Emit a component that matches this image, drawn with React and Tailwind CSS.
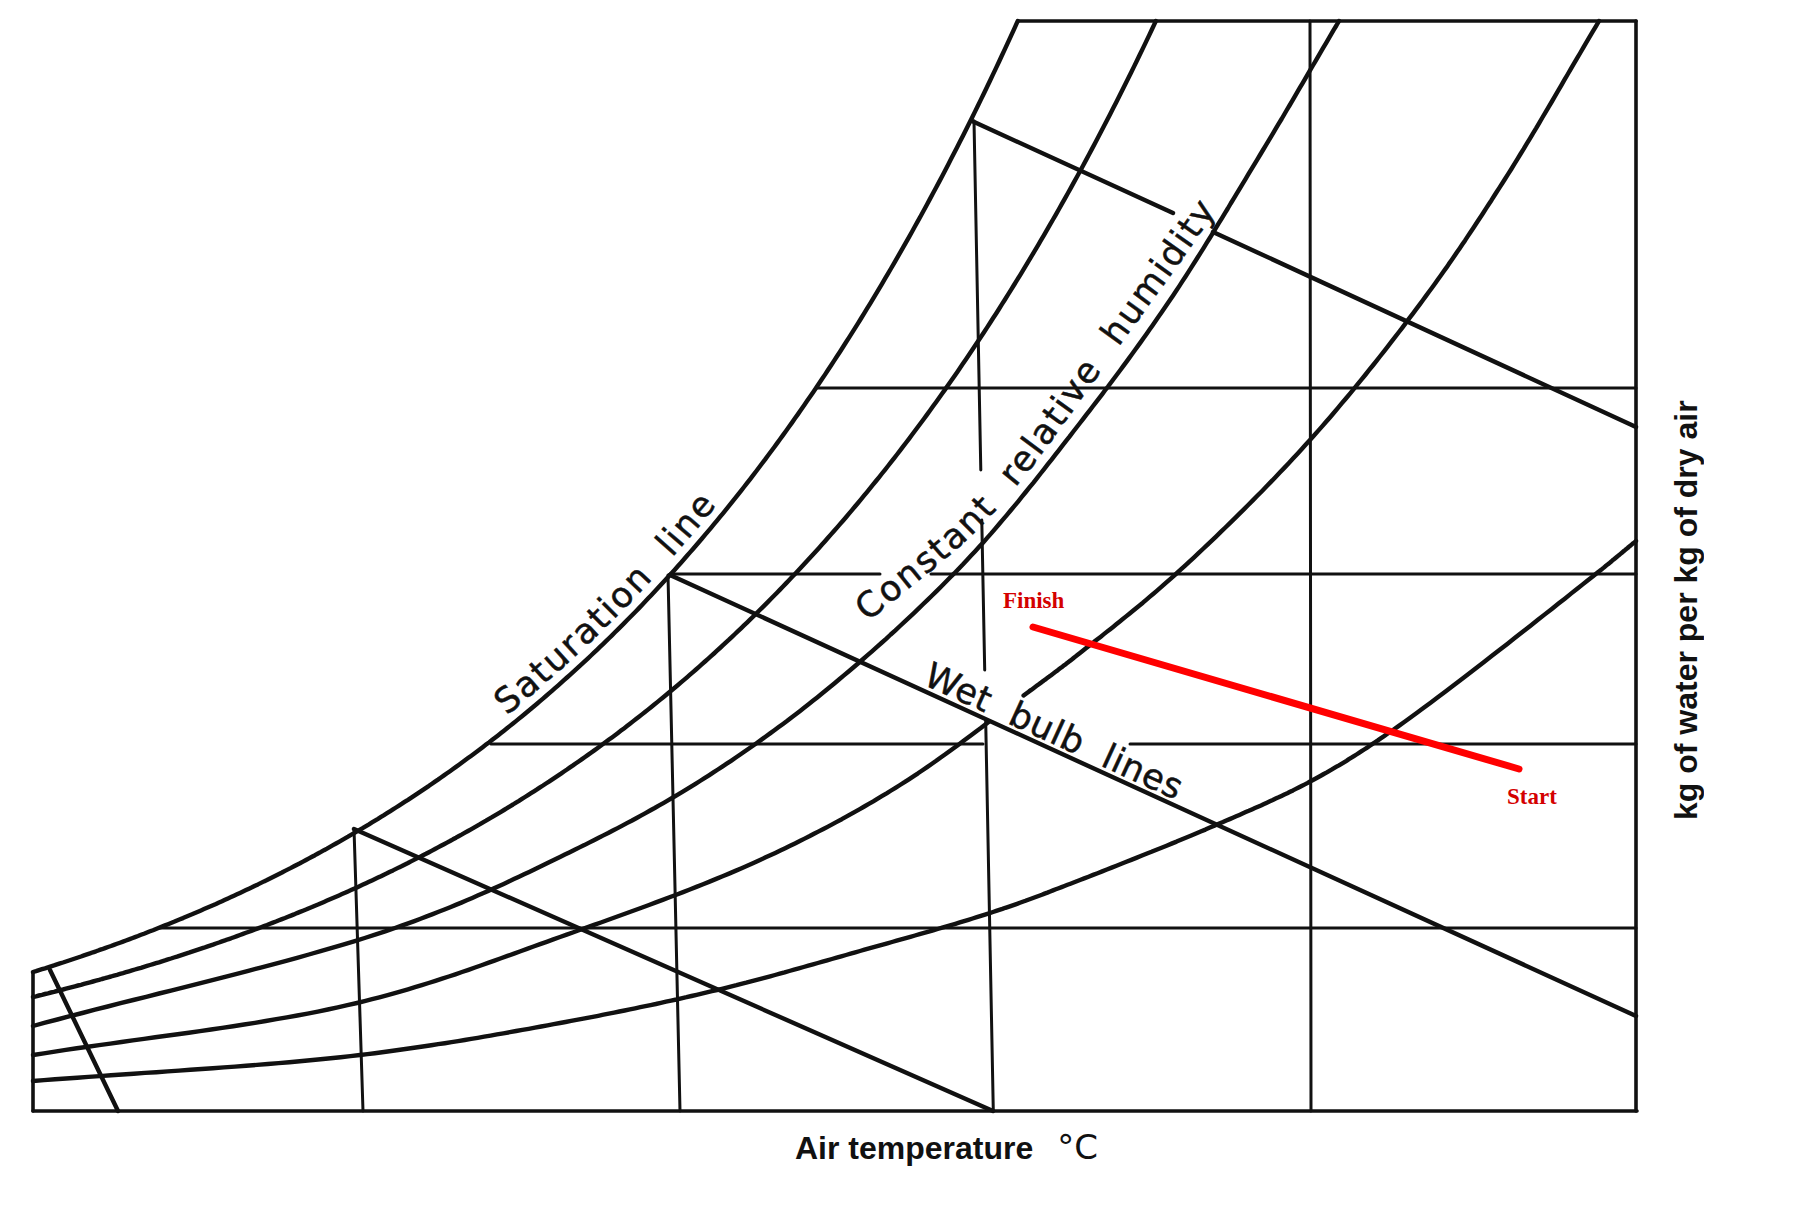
import React from 'react';

function crSeg(p0, p1, p2, p3, n, out) {
  const d = (a, b) => Math.pow(Math.hypot(b[0] - a[0], b[1] - a[1]), 0.5) || 1e-4;
  const t0 = 0, t1 = t0 + d(p0, p1), t2 = t1 + d(p1, p2), t3 = t2 + d(p2, p3);
  for (let j = 0; j < n; j++) {
    const t = t1 + ((t2 - t1) * j) / n;
    const lerp = (a, b, ta, tb) => [
      ((tb - t) * a[0] + (t - ta) * b[0]) / (tb - ta),
      ((tb - t) * a[1] + (t - ta) * b[1]) / (tb - ta),
    ];
    const A1 = lerp(p0, p1, t0, t1), A2 = lerp(p1, p2, t1, t2), A3 = lerp(p2, p3, t2, t3);
    const B1 = lerp(A1, A2, t0, t2), B2 = lerp(A2, A3, t1, t3);
    out.push(lerp(B1, B2, t1, t2));
  }
}

function spline(pts, n = 30) {
  const out = [];
  const L = pts.length;
  const first = [2 * pts[0][0] - pts[1][0], 2 * pts[0][1] - pts[1][1]];
  const last = [2 * pts[L - 1][0] - pts[L - 2][0], 2 * pts[L - 1][1] - pts[L - 2][1]];
  for (let i = 0; i < L - 1; i++) {
    const p0 = i === 0 ? first : pts[i - 1];
    const p3 = i + 2 < L ? pts[i + 2] : last;
    crSeg(p0, pts[i], pts[i + 1], p3, n, out);
  }
  out.push(pts[L - 1]);
  return out;
}

// exponential humidity curve: y = 1111 - (A * e^(k(x-33)) + B), cut at top frame y = 21
function expCurve(A, k, B) {
  const out = [];
  const f = (x) => 1111 - (A * Math.exp(k * (x - 33)) + B);
  let prev = null;
  for (let x = 33; x < 1700; x += 3) {
    const p = [x, f(x)];
    if (p[1] < 21) {
      const t = (prev[1] - 21) / (prev[1] - p[1]);
      out.push([prev[0] + t * (p[0] - prev[0]), 21]);
      break;
    }
    out.push(p);
    prev = p;
  }
  return out;
}

const toD = (poly) => 'M' + poly.map((p) => p[0].toFixed(1) + ' ' + p[1].toFixed(1)).join(' L');

function offset(poly, dist) {
  return poly.map((p, i) => {
    const a = poly[Math.max(0, i - 1)], b = poly[Math.min(poly.length - 1, i + 1)];
    const tx = b[0] - a[0], ty = b[1] - a[1];
    const len = Math.hypot(tx, ty) || 1;
    return [p[0] + (dist * ty) / len, p[1] - (dist * tx) / len];
  });
}

const satPoly = expCurve(154.2, 0.002, -15.2);
const c2Poly = expCurve(126.2, 0.00193, -12.2);
const c3Poly = spline([[33, 1026], [395, 928], [560, 857], [700, 781], [830, 687], [967, 560], [1080, 423], [1170, 300], [1260, 155], [1339, 21]]);
const c4Poly = spline([[33, 1055], [357, 1003], [560, 937], [760, 860], [900, 785], [1027, 693], [1080, 653], [1177, 573], [1310, 440], [1423, 300], [1505, 179], [1599, 21]]);
const c5Poly = spline([[33, 1081], [360, 1055], [560, 1023], [717, 990], [860, 951], [993, 912], [1080, 880], [1223, 822], [1313, 780], [1393, 730], [1597, 573], [1636, 541]]);

const satText = toD(offset(satPoly, 10).filter((p) => p[0] >= 505));
const rhText = toD(spline([[868, 622], [990, 517], [1120, 345], [1215, 212], [1250, 155], [1290, 90]]));

const v3x = (y) => 974 + 0.0195 * (y - 121);

const GRID = [
  // horizontal humidity lines
  [817, 388, 1636, 388],
  [670, 574, 880, 574],
  [931, 574, 1636, 574],
  [491, 744, 983, 744],
  [1130, 744, 1636, 744],
  [159, 928, 1636, 928],
  // vertical temperature lines
  [354, 829, 363, 1111],
  [668, 575, 680, 1111],
  [v3x(121), 121, v3x(470), 470],
  [v3x(520), 520, v3x(670), 670],
  [v3x(720), 720, v3x(1111), 1111],
  [1310, 21, 1311, 1111],
];

const FRAME = [
  [33, 972, 33, 1111],
  [33, 1111, 1637, 1111],
  [1636, 21, 1636, 1111],
  [1018, 21, 1636, 21],
];

const WET = [
  [50, 970, 118, 1111],
  [354, 829, 993, 1111],
  [670, 575, 1636, 1016],
  [972, 121, 1173, 213],
  [1213, 232, 1636, 427],
];

function Lines({ list }) {
  return list.map((l, i) => <line key={i} x1={l[0]} y1={l[1]} x2={l[2]} y2={l[3]} />);
}

function Chart() {
  const c4a = c4Poly.filter((p) => p[0] <= 992);
  const c4b = c4Poly.filter((p) => p[0] >= 1022);
  const curves = [satPoly, c2Poly, c3Poly, c4a, c4b, c5Poly];
  const labelFont = "'DejaVu Sans', 'Open Sans', sans-serif";
  return (
    <svg width="1650" height="1120" viewBox="0 0 1650 1120" className="block shrink-0">
      <defs>
        <path id="satText" d={satText} />
        <path id="rhText" d={rhText} />
      </defs>
      <g stroke="#111" strokeWidth="3" strokeLinecap="round" fill="none">
        <Lines list={GRID} />
      </g>
      <g stroke="#111" strokeWidth="3.6" strokeLinecap="round" strokeLinejoin="round" fill="none">
        <Lines list={FRAME} />
      </g>
      <g stroke="#111" strokeWidth="4.4" strokeLinecap="round" strokeLinejoin="round" fill="none">
        <Lines list={WET} />
        {curves.map((c, i) => (
          <path key={i} d={toD(c)} />
        ))}
      </g>
      <g fill="#111" stroke="#111" strokeWidth="0.5" fontFamily={labelFont} fontSize="35" letterSpacing="2">
        <text>
          <textPath href="#satText">{'Saturation\u00A0\u00A0line'}</textPath>
        </text>
        <text>
          <textPath href="#rhText">{'Constant\u00A0\u00A0relative\u00A0\u00A0humidity'}</textPath>
        </text>
        <text transform="translate(922 684) rotate(24.6)" letterSpacing="0.6">
          {'Wet\u00A0\u00A0bulb\u00A0\u00A0lines'}
        </text>
      </g>
      <line x1="1033" y1="627" x2="1519" y2="769" stroke="#ff0000" strokeWidth="7" strokeLinecap="round" />
      <g fill="#d40000" fontFamily="'Liberation Serif', 'Times New Roman', serif" fontWeight="700" fontSize="23">
        <text x="1003" y="608">Finish</text>
        <text x="1507" y="804">Start</text>
      </g>
    </svg>
  );
}

export default function App() {
  return (
    <div className="w-[1803px] h-[1224px] bg-white overflow-hidden text-[#111]">
      <div className="flex h-[1120px]">
        <Chart />
        <div className="pt-[400px] pl-[20px]">
          <div className="[writing-mode:vertical-rl] rotate-180 h-[420px] text-center whitespace-nowrap font-['Liberation_Sans',Arial,sans-serif] font-bold text-[32px] leading-[32px]">
            kg of water per kg of dry air
          </div>
        </div>
      </div>
      <div className="flex items-baseline pl-[795px] pt-[10px]">
        <span className="font-['Liberation_Sans',Arial,sans-serif] font-bold text-[32px] leading-[32px]">
          Air temperature
        </span>
        <span className="ml-[24px] font-['DejaVu_Sans',sans-serif] text-[34px] leading-[34px]">°C</span>
      </div>
    </div>
  );
}
